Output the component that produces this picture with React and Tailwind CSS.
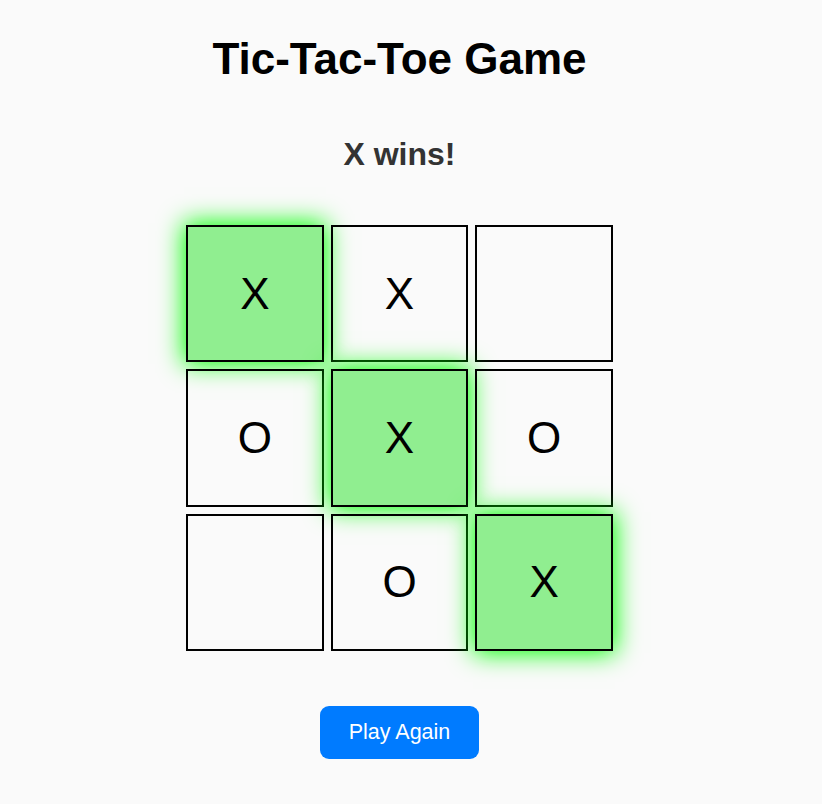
export default function App() {
  const board = ["X", "X", "", "O", "X", "O", "", "O", "X"];
  const win = [0, 4, 8];
  return (
    <div className="min-h-[804px] w-full bg-[#fafafa]" style={{ fontFamily: '"Liberation Sans", Arial, sans-serif' }}>
      <div className="w-[799px] flex flex-col items-center text-center">
        <h1 className="mt-[35px] text-[44px] leading-[48px] font-bold text-black">Tic-Tac-Toe Game</h1>
        <div className="mt-[51px] text-[32px] leading-[40px] font-bold text-[#333]">X wins!</div>
        <div className="mt-[51px] grid h-[426px] w-[427px] grid-cols-3 grid-rows-3 gap-[7px]">
          {board.map((v, i) => (
            <div
              key={i}
              className={
                "border-2 border-black flex items-center justify-center text-[44px] text-black " +
                (win.includes(i) ? "bg-[#90ee90] shadow-[0_0_24px_2px_#00ff00]" : "bg-transparent")
              }
            >
              {v}
            </div>
          ))}
        </div>
        <button className="mt-[55px] h-[53px] w-[159px] rounded-[9px] bg-[#007bff] text-white text-[21.5px]">
          Play Again
        </button>
      </div>
    </div>
  );
}
